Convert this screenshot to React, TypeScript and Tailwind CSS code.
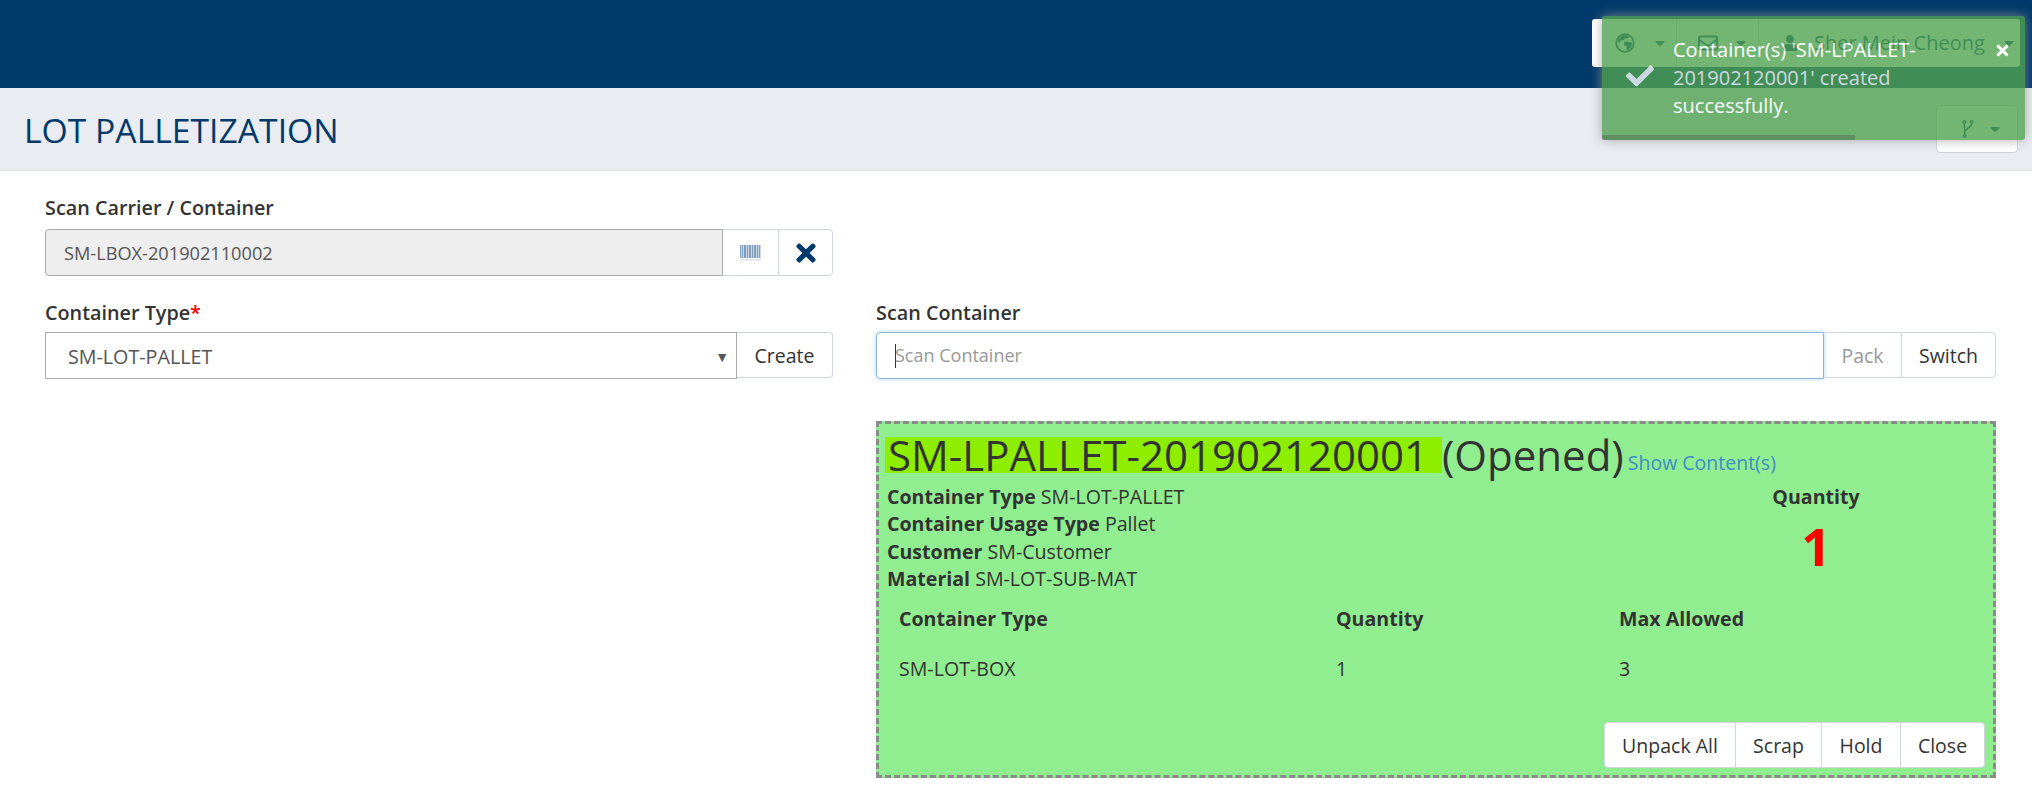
import { FaCaretDown, FaCheck, FaRegEnvelope, FaTimes, FaUser } from "react-icons/fa"

function BarcodeIcon() {
  const bars = [0, 2, 4, 5, 7, 9, 10, 12, 14, 15, 17, 19]
  return (
    <svg width="21" height="16" viewBox="0 0 21 16" className="text-[#7f9dbd]">
      {bars.map((x) => (
        <rect key={x} x={x} y="0" width="1.4" height="13" fill="currentColor" />
      ))}
      <rect x="0" y="14.5" width="21" height="1" fill="currentColor" opacity="0.45" />
    </svg>
  )
}

function BranchIcon() {
  return (
    <svg width="12" height="18" viewBox="0 0 14 22" fill="none" stroke="currentColor" strokeWidth="1.8" className="text-[#003a6b]">
      <circle cx="2.5" cy="2.5" r="1.6" />
      <circle cx="11.5" cy="2.5" r="1.6" />
      <circle cx="3" cy="19.5" r="1.6" />
      <path d="M2.6 4.2 L3 17.8" />
      <path d="M11.5 4.2 C11.5 9 3.5 10 3 15" />
    </svg>
  )
}

function GlobeIcon() {
  return (
    <svg width="20" height="20" viewBox="0 0 20 20" className="text-[#003a6b]">
      <circle cx="10" cy="10" r="8.8" fill="none" stroke="currentColor" strokeWidth="1.8" />
      <path d="M7 2.5 L12 2 L14.5 4 L12.5 5.5 L10.5 5 L9 7 L6 7.5 L4.5 10 L3 9 L3.5 6 Z" fill="currentColor" />
      <path d="M9 9 L13 8.5 L17.5 10 L16 14 L13 17 L11.5 16.5 L11.5 13 L9 12 Z" fill="currentColor" />
    </svg>
  )
}

function Toast() {
  return (
    <div className="absolute left-[1602px] top-4 w-[423px] h-[124px] rounded-[3px] bg-[#51a351] opacity-80 shadow-[0_0_12px_#999] text-white">
      <div className="flex h-[119px]">
        <div className="w-[71px] flex-none flex justify-center pt-[46px] pl-1">
          <FaCheck className="w-[34px] h-[28px]" />
        </div>
        <div className="w-[270px] pt-[20px] text-[20px] leading-[28px]">
          Container(s) 'SM-LPALLET-201902120001' created successfully.
        </div>
        <FaTimes className="w-[15px] h-[17px] ml-[52px] mt-[26px]" />
      </div>
      <div className="h-[5px] w-[253px] bg-black/25"></div>
    </div>
  )
}

function TopNav() {
  return (
    <div className="h-[88px] bg-[#003a6b] flex justify-end items-start pt-[19px] pr-3">
      <div className="w-[428px] h-[48px] bg-white rounded-[3px] flex items-center text-[#003a6b] text-[20px]">
        <div className="w-[85px] h-full flex items-center pl-[23px] gap-[17px] border-r border-gray-300">
          <GlobeIcon />
          <FaCaretDown className="w-4 h-4" />
        </div>
        <div className="w-[82px] h-full flex items-center pl-[21px] gap-[15px] border-r border-gray-300">
          <FaRegEnvelope className="w-5 h-5" />
          <FaCaretDown className="w-4 h-4" />
        </div>
        <div className="flex items-center pl-[23px] gap-[16px] whitespace-nowrap">
          <FaUser className="w-4 h-4" />
          <span>Sher Mein Cheong</span>
          <FaCaretDown className="w-4 h-4" />
        </div>
      </div>
    </div>
  )
}

function SubHeader() {
  return (
    <div className="h-[83px] bg-[#e9ecf1] border-b border-[#e0e3e8] flex items-start justify-between pl-6 pr-[14px]">
      <h1 className="text-[33.7px] leading-[84px] text-[#003a6b]">LOT PALLETIZATION</h1>
      <div className="mt-[17px] w-[82px] h-[48px] bg-white border border-gray-300 rounded-[4px] flex items-center pl-[25px] gap-[13px]">
        <BranchIcon />
        <FaCaretDown className="w-4 h-4 text-[#003a6b]" />
      </div>
    </div>
  )
}

function ContainerPanel() {
  return (
    <div className="mt-[42px] h-[357px] bg-[#90ee90] border-[3px] border-dashed border-[#8a8a8a] flex flex-col text-[19.6px] leading-[27.4px] text-[#333]">
      <div className="h-[59px] pl-[6px] pt-[13px] text-[42px] leading-[36px] whitespace-pre">
        <span className="inline-block h-[36px] bg-[#8eee00] px-[3px]">SM-LPALLET-201902120001 </span>
        <span>(Opened)</span>
        <a className="ml-1 text-[19.5px] text-[#428bca] relative -top-px">Show Content(s)</a>
      </div>
      <div className="flex pl-[8px]">
        <div className="w-[885px]">
          <div><b className="font-bold">Container Type</b> SM-LOT-PALLET</div>
          <div><b className="font-bold">Container Usage Type</b> Pallet</div>
          <div><b className="font-bold">Customer</b> SM-Customer</div>
          <div><b className="font-bold">Material</b> SM-LOT-SUB-MAT</div>
        </div>
        <div className="w-[88px] text-center">
          <div className="font-bold">Quantity</div>
          <div className="text-[52px] leading-[72px] font-bold text-[#ff0000]">1</div>
        </div>
      </div>
      <div className="grid grid-cols-[437px_283px_1fr] pl-[20px] mt-[12px] gap-y-[23px]">
        <div className="font-bold">Container Type</div>
        <div className="font-bold">Quantity</div>
        <div className="font-bold">Max Allowed</div>
        <div>SM-LOT-BOX</div>
        <div>1</div>
        <div>3</div>
      </div>
      <div className="mt-auto mb-[7px] mr-[8px] self-end h-[46px] flex bg-white rounded-[4px] border border-gray-300 text-[19.5px] divide-x divide-gray-300">
        <div className="w-[131px] pt-[2px] flex items-center justify-center">Unpack All</div>
        <div className="w-[86px] pt-[2px] flex items-center justify-center">Scrap</div>
        <div className="w-[79px] pt-[2px] flex items-center justify-center">Hold</div>
        <div className="w-[83px] pt-[2px] flex items-center justify-center">Close</div>
      </div>
    </div>
  )
}

export default function App() {
  return (
    <div className="relative w-[2032px] h-[804px] overflow-hidden bg-white text-[#333] font-['Open_Sans',sans-serif]">
      <TopNav />
      <SubHeader />
      <div className="pl-[45px] pr-9 pt-6">
        <label className="block h-6 pt-px mb-[10px] text-[19.8px] leading-6 font-semibold">Scan Carrier / Container</label>
        <div className="w-[788px] h-[47px] flex">
          <div className="w-[678px] bg-[#eeeeee] border border-[#aaa] rounded-l-[4px] pt-[2px] flex items-center pl-[18px] text-[18.2px] text-[#555]">
            SM-LBOX-201902110002
          </div>
          <div className="w-[55px] flex items-center justify-center border-y border-gray-300">
            <BarcodeIcon />
          </div>
          <div className="flex-1 flex items-center justify-center border border-gray-300 rounded-r-[4px]">
            <FaTimes className="w-[28px] h-[28px] text-[#003a6b]" />
          </div>
        </div>
        <div className="flex gap-[43px] mt-6">
          <div className="w-[788px] flex-none">
            <label className="block h-6 pt-px mb-2 text-[19.8px] leading-6 font-semibold">
              Container Type<span className="text-[#ff0000]">*</span>
            </label>
            <div className="h-[47px] flex">
              <div className="w-[692px] border border-[#aaa] pt-[2px] flex items-center justify-between pl-[22px] pr-[7px] text-[19.7px] text-[#555]">
                <span>SM-LOT-PALLET</span>
                <span className="text-[14px]">▼</span>
              </div>
              <div className="flex-1 h-[46px] pt-[2px] flex items-center justify-center border border-l-0 border-gray-300 rounded-r-[4px] text-[19.5px]">
                Create
              </div>
            </div>
          </div>
          <div className="flex-1">
            <label className="block h-6 pt-px mb-2 text-[19.8px] leading-6 font-semibold">Scan Container</label>
            <div className="h-[47px] flex">
              <div className="w-[948px] border border-[#8eb3d9] rounded-l-[4px] shadow-[0_0_5px_rgba(102,175,233,0.5)] flex items-center pl-[18px] text-[18px] text-[#999]">
                <span className="w-px h-[24px] bg-[#333] -mr-px"></span>
                Scan Container
              </div>
              <div className="w-[77px] h-[46px] pt-[2px] flex items-center justify-center border-y border-gray-300 text-[19.5px] text-[#999]">Pack</div>
              <div className="flex-1 h-[46px] pt-[2px] flex items-center justify-center border border-gray-300 rounded-r-[4px] text-[19.5px]">Switch</div>
            </div>
            <ContainerPanel />
          </div>
        </div>
      </div>
      <Toast />
    </div>
  )
}
